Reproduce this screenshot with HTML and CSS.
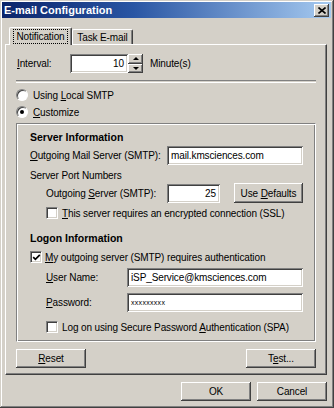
FILE: index.html
```html
<!DOCTYPE html>
<html>
<head>
<meta charset="utf-8">
<link rel="stylesheet" href="styles.css">
</head>
<body>
<div class="window">
  <div class="titlebar">
    <span class="title">E-mail Configuration</span>
    <span class="close"><svg width="8" height="7" viewBox="0 0 8 7"><path d="M0.5 0.5 L7.5 6.5 M7.5 0.5 L0.5 6.5" stroke="#000" stroke-width="1.6"/></svg></span>
  </div>
  <div class="body">
    <div class="tabs">
      <div class="tab active"><span class="focus">Notification</span></div>
      <div class="tab"><span>Task E-mail</span></div>
    </div>
    <div class="panel">
      <div class="row interval-row">
        <span class="lbl-interval"><u>I</u>nterval:</span>
        <div class="field interval-field"><span>10</span></div>
        <div class="spin-btns"><span class="sb up"><i class="tri-up"></i></span><span class="sb down"><i class="tri-down"></i></span></div>
        <span class="unit">Minute(s)</span>
      </div>
      <div class="sep"></div>
      <div class="row radio-row first"><span class="radio"></span><span>Using <u>L</u>ocal SMTP</span></div>
      <div class="row radio-row second"><span class="radio checked"></span><span><u>C</u>ustomize</span></div>
      <div class="group">
        <div class="heading h-server">Server Information</div>
        <div class="row field-row mail-row">
          <span class="lbl lbl-mail"><u>O</u>utgoing Mail Server (SMTP):</span>
          <div class="field mail-field"><span>mail.kmsciences.com</span></div>
        </div>
        <div class="sub-label">Server Port Numbers</div>
        <div class="row port-row">
          <span class="lbl lbl-port">Outgoing <u>S</u>erver (SMTP):</span>
          <div class="field port-field"><span>25</span></div>
          <span class="btn btn-defaults"><span>Use <u>D</u>efaults</span></span>
        </div>
        <div class="row check-row ssl-row"><span class="check"></span><span><u>T</u>his server requires an encrypted connection (SSL)</span></div>
        <div class="heading h-logon">Logon Information</div>
        <div class="row check-row auth-row"><span class="check checked"><svg width="9" height="9" viewBox="0 0 9 9"><path d="M1.2 4.2 L3.4 6.4 L7.8 1.8" fill="none" stroke="#000" stroke-width="1.7"/></svg></span><span><u>M</u>y outgoing server (SMTP) requires authentication</span></div>
        <div class="row field-row user-row">
          <span class="lbl lbl-user"><u>U</u>ser Name:</span>
          <div class="field user-field"><span>iSP_Service@kmsciences.com</span></div>
        </div>
        <div class="row field-row pass-row">
          <span class="lbl lbl-user"><u>P</u>assword:</span>
          <div class="field user-field"><span class="pw">xxxxxxxxx</span></div>
        </div>
        <div class="row check-row spa-row"><span class="check"></span><span>Log on using Secure Password <u>A</u>uthentication (SPA)</span></div>
      </div>
      <div class="row panel-buttons">
        <span class="btn"><span><u>R</u>eset</span></span>
        <span class="btn"><span>T<u>e</u>st...</span></span>
      </div>
    </div>
    <div class="row footer">
      <span class="btn"><span>OK</span></span>
      <span class="btn"><span>Cancel</span></span>
    </div>
  </div>
</div>
</body>
</html>
```
FILE: styles.css
```css
html, body {
  margin: 0;
  padding: 0;
  background: #d4d0c8;
}
body {
  font-family: "Liberation Sans", Arial, sans-serif;
  font-size: 10px;
  letter-spacing: -0.12px;
  color: #000;
}
u { text-decoration: underline; text-underline-offset: 1px; }

.window {
  width: 334px;
  height: 408px;
  box-sizing: border-box;
  padding: 2px 3px 3px 2px;
  background: #d4d0c8;
  box-shadow: inset -1px -1px #404040, inset 1px 1px #d4d0c8, inset -2px -2px #808080, inset 2px 2px #fff;
  display: flex;
  flex-direction: column;
}

.titlebar {
  height: 16px;
  display: flex;
  align-items: center;
  justify-content: space-between;
  background: linear-gradient(to right, #0a246a 0%, #2a56a4 40%, #a6caf0 100%);
  color: #fff;
  font-weight: bold;
  font-size: 11px;
  letter-spacing: 0;
  padding: 0 2px 0 2px;
}
.close {
  width: 15px;
  height: 13px;
  box-sizing: border-box;
  background: #d4d0c8;
  box-shadow: inset -1px -1px #404040, inset 1px 1px #fff, inset -2px -2px #808080;
  display: flex;
  align-items: center;
  justify-content: center;
}

.body {
  padding: 0 4px 0 3px;
  display: flex;
  flex-direction: column;
}

.tabs {
  display: flex;
  align-items: flex-end;
  margin-top: 9px;
  height: 17px;
  padding-left: 4px;
}
.tab {
  box-sizing: border-box;
  height: 15px;
  width: 61px;
  border-top: 1px solid #fff;
  border-left: 1px solid #fff;
  border-right: 1px solid #404040;
  box-shadow: inset -1px 0 #808080;
  border-radius: 2px 2px 0 0;
  display: flex;
  align-items: center;
  justify-content: center;
}
.tab.active {
  height: 18px;
  width: 63px;
  margin-bottom: -1px;
  position: relative;
  z-index: 1;
  background: #d4d0c8;
  padding-bottom: 1px;
}
.focus {
  outline: 1px dotted #000;
  outline-offset: 1px;
  padding: 0 1px;
}

.panel {
  box-sizing: border-box;
  height: 331px;
  border: 1px solid;
  border-color: #fff #404040 #404040 #fff;
  box-shadow: inset -1px -1px #808080;
  padding: 0 10px;
  display: flex;
  flex-direction: column;
}

.row { display: flex; align-items: center; }

.interval-row { margin-top: 9px; height: 19px; }
.lbl-interval { width: 53px; margin-left: 1px; }
.interval-field { width: 58px; justify-content: flex-end; }
.spin-btns { display: flex; flex-direction: column; width: 15px; height: 19px; }
.sb {
  box-sizing: border-box;
  flex: 1;
  background: #d4d0c8;
  box-shadow: inset -1px -1px #404040, inset 1px 1px #fff, inset -2px -2px #808080;
  display: flex;
  align-items: center;
  justify-content: center;
}
.tri-up { width: 0; height: 0; border-left: 3px solid transparent; border-right: 3px solid transparent; border-bottom: 3px solid #000; }
.tri-down { width: 0; height: 0; border-left: 3px solid transparent; border-right: 3px solid transparent; border-top: 3px solid #000; }
.unit { margin-left: 7px; }

.sep {
  margin-top: 7px;
  height: 1px;
  border-top: 1px solid #808080;
  border-bottom: 1px solid #fff;
}

.radio-row { height: 14px; }
.radio-row.first { margin-top: 5px; }
.radio-row.second { margin-top: 3px; }
.radio {
  box-sizing: border-box;
  width: 12px;
  height: 12px;
  border-radius: 50%;
  border: 1px solid;
  border-color: #808080 #fff #fff #808080;
  box-shadow: inset 1px 1px #404040;
  background: #fff;
  margin-right: 5px;
  display: flex;
  align-items: center;
  justify-content: center;
}
.radio.checked::after {
  content: "";
  width: 4px;
  height: 4px;
  border-radius: 50%;
  background: #000;
}

.group {
  margin-top: 4px;
  box-sizing: border-box;
  height: 219px;
  border: 1px solid #808080;
  border-right-color: #fff;
  border-bottom-color: #fff;
  box-shadow: inset 1px 1px #fff, inset -1px -1px #808080;
  padding: 0 12px 0 13px;
  display: flex;
  flex-direction: column;
}
.heading { font-weight: bold; height: 14px; line-height: 14px; font-size: 10.5px; letter-spacing: 0; }
.h-server { margin-top: 6px; }
.h-logon { margin-top: 11px; }

.field {
  box-sizing: border-box;
  height: 19px;
  background: #fff;
  box-shadow: inset 1px 1px #808080, inset -1px -1px #fff, inset 2px 2px #404040, inset -2px -2px #d4d0c8;
  padding: 0 4px;
  display: flex;
  align-items: center;
  white-space: nowrap;
  overflow: hidden;
}
.mail-row { margin-top: 2px; height: 19px; }
.lbl-mail { width: 137px; }
.mail-field { width: 136px; }

.sub-label { margin-top: 4px; height: 14px; line-height: 14px; }
.port-row { height: 20px; }
.lbl-port { width: 121px; margin-left: 16px; }
.port-field { width: 53px; justify-content: flex-end; }

.btn {
  box-sizing: border-box;
  width: 70px;
  height: 19px;
  background: #d4d0c8;
  box-shadow: inset -1px -1px #404040, inset 1px 1px #fff, inset -2px -2px #808080;
  display: flex;
  align-items: center;
  justify-content: center;
  white-space: nowrap;
}
.btn-defaults { margin-left: auto; height: 20px; width: 69px; }

.check-row { height: 14px; }
.ssl-row { margin-top: 3px; padding-left: 16px; }
.auth-row { margin-top: 5px; }
.spa-row { margin-top: 8px; padding-left: 16px; }
.check {
  box-sizing: border-box;
  width: 12px;
  height: 12px;
  border: 1px solid;
  border-color: #808080 #fff #fff #808080;
  box-shadow: inset 1px 1px #404040, inset -1px -1px #d4d0c8;
  background: #fff;
  margin-right: 4px;
  display: flex;
  align-items: center;
  justify-content: center;
}
.auth-row .check { margin-right: 3px; }

.user-row { margin-top: 4px; height: 19px; }
.pass-row { margin-top: 6px; height: 19px; }
.lbl-user { width: 81px; margin-left: 16px; }
.user-field { width: 176px; }
.pw { font-size: 7px; letter-spacing: 0.3px; }

.panel-buttons {
  margin-top: 7px;
  justify-content: space-between;
}

.footer {
  margin-top: 7px;
  justify-content: flex-end;
  gap: 6px;
}
```
